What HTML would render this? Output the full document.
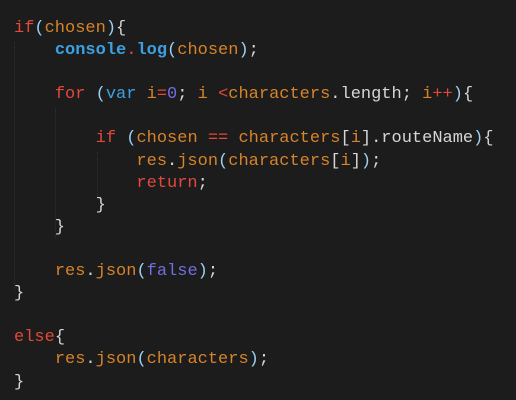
<!DOCTYPE html><html><head><style>
body{margin:0;background:#1c1c1c;width:516px;height:400px;overflow:hidden;position:relative}
pre{margin:0;position:absolute;left:14px;top:18px;font:17px/22.1px "Liberation Mono",monospace;color:#d6d6d6;}
.k{color:#e2483b}.o{color:#d6832a}.b{color:#3da0e2}.bb{color:#3da0e2;font-weight:bold}.p{color:#6f6fe0}.w{color:#d6d6d6}.lb{color:#9cd0f0}
.g{position:absolute;border-left:1px dotted #2e2e2e}
</style></head><body>
<div class="g" style="left:14px;top:42px;height:250px"></div>
<div class="g" style="left:55px;top:108px;height:130px"></div>
<div class="g" style="left:97px;top:152px;height:44px"></div>
<pre><span class="k">if</span><span class="lb">(</span><span class="o">chosen</span><span class="lb">)</span>{
    <span class="bb">console</span><span class="k">.</span><span class="bb">log</span><span class="lb">(</span><span class="o">chosen</span><span class="lb">)</span>;

    <span class="k">for</span> <span class="lb">(</span><span class="b">var</span> <span class="o">i</span><span class="k">=</span><span class="p">0</span>; <span class="o">i</span> <span class="k">&lt;</span><span class="o">characters</span>.length; <span class="o">i</span><span class="k">++</span><span class="lb">)</span>{

        <span class="k">if</span> <span class="lb">(</span><span class="o">chosen</span> <span class="k">==</span> <span class="o">characters</span>[<span class="o">i</span>].routeName<span class="lb">)</span>{
            <span class="o">res</span>.<span class="o">json</span><span class="lb">(</span><span class="o">characters</span>[<span class="o">i</span>]<span class="lb">)</span>;
            <span class="k">return</span>;
        }
    }

    <span class="o">res</span>.<span class="o">json</span><span class="lb">(</span><span class="p">false</span><span class="lb">)</span>;
}

<span class="k">else</span>{
    <span class="o">res</span>.<span class="o">json</span><span class="lb">(</span><span class="o">characters</span><span class="lb">)</span>;
}</pre>
</body></html>
